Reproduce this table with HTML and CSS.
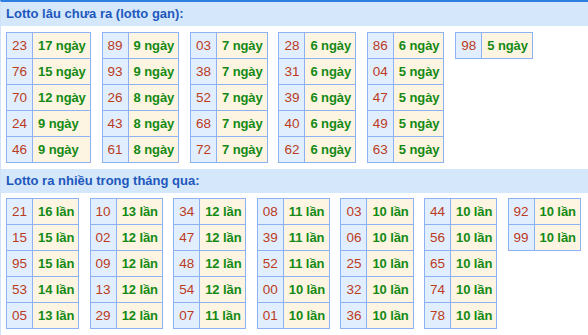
FILE: index.html
```html
<!DOCTYPE html>
<html lang="vi">
<head>
<meta charset="utf-8">
<link rel="stylesheet" href="styles.css">
</head>
<body>
<div class="box">
  <div class="head">Lotto lâu chưa ra (lotto gan):</div>
  <div class="tables">
    <table class="lt">
      <tr><td class="n">23</td><td class="v">17 ngày</td></tr>
      <tr><td class="n">76</td><td class="v">15 ngày</td></tr>
      <tr><td class="n">70</td><td class="v">12 ngày</td></tr>
      <tr><td class="n">24</td><td class="v">9 ngày</td></tr>
      <tr><td class="n">46</td><td class="v">9 ngày</td></tr>
    </table>
    <table class="lt">
      <tr><td class="n">89</td><td class="v">9 ngày</td></tr>
      <tr><td class="n">93</td><td class="v">9 ngày</td></tr>
      <tr><td class="n">26</td><td class="v">8 ngày</td></tr>
      <tr><td class="n">43</td><td class="v">8 ngày</td></tr>
      <tr><td class="n">61</td><td class="v">8 ngày</td></tr>
    </table>
    <table class="lt">
      <tr><td class="n">03</td><td class="v">7 ngày</td></tr>
      <tr><td class="n">38</td><td class="v">7 ngày</td></tr>
      <tr><td class="n">52</td><td class="v">7 ngày</td></tr>
      <tr><td class="n">68</td><td class="v">7 ngày</td></tr>
      <tr><td class="n">72</td><td class="v">7 ngày</td></tr>
    </table>
    <table class="lt">
      <tr><td class="n">28</td><td class="v">6 ngày</td></tr>
      <tr><td class="n">31</td><td class="v">6 ngày</td></tr>
      <tr><td class="n">39</td><td class="v">6 ngày</td></tr>
      <tr><td class="n">40</td><td class="v">6 ngày</td></tr>
      <tr><td class="n">62</td><td class="v">6 ngày</td></tr>
    </table>
    <table class="lt">
      <tr><td class="n">86</td><td class="v">6 ngày</td></tr>
      <tr><td class="n">04</td><td class="v">5 ngày</td></tr>
      <tr><td class="n">47</td><td class="v">5 ngày</td></tr>
      <tr><td class="n">49</td><td class="v">5 ngày</td></tr>
      <tr><td class="n">63</td><td class="v">5 ngày</td></tr>
    </table>
    <table class="lt">
      <tr><td class="n">98</td><td class="v">5 ngày</td></tr>
    </table>
  </div>
  <div class="head">Lotto ra nhiều trong tháng qua:</div>
  <div class="tables t2">
    <table class="lt">
      <tr><td class="n">21</td><td class="v">16 lần</td></tr>
      <tr><td class="n">15</td><td class="v">15 lần</td></tr>
      <tr><td class="n">95</td><td class="v">15 lần</td></tr>
      <tr><td class="n">53</td><td class="v">14 lần</td></tr>
      <tr><td class="n">05</td><td class="v">13 lần</td></tr>
    </table>
    <table class="lt">
      <tr><td class="n">10</td><td class="v">13 lần</td></tr>
      <tr><td class="n">02</td><td class="v">12 lần</td></tr>
      <tr><td class="n">09</td><td class="v">12 lần</td></tr>
      <tr><td class="n">13</td><td class="v">12 lần</td></tr>
      <tr><td class="n">29</td><td class="v">12 lần</td></tr>
    </table>
    <table class="lt">
      <tr><td class="n">34</td><td class="v">12 lần</td></tr>
      <tr><td class="n">47</td><td class="v">12 lần</td></tr>
      <tr><td class="n">48</td><td class="v">12 lần</td></tr>
      <tr><td class="n">54</td><td class="v">12 lần</td></tr>
      <tr><td class="n">07</td><td class="v">11 lần</td></tr>
    </table>
    <table class="lt">
      <tr><td class="n">08</td><td class="v">11 lần</td></tr>
      <tr><td class="n">39</td><td class="v">11 lần</td></tr>
      <tr><td class="n">52</td><td class="v">11 lần</td></tr>
      <tr><td class="n">00</td><td class="v">10 lần</td></tr>
      <tr><td class="n">01</td><td class="v">10 lần</td></tr>
    </table>
    <table class="lt">
      <tr><td class="n">03</td><td class="v">10 lần</td></tr>
      <tr><td class="n">06</td><td class="v">10 lần</td></tr>
      <tr><td class="n">25</td><td class="v">10 lần</td></tr>
      <tr><td class="n">32</td><td class="v">10 lần</td></tr>
      <tr><td class="n">36</td><td class="v">10 lần</td></tr>
    </table>
    <table class="lt">
      <tr><td class="n">44</td><td class="v">10 lần</td></tr>
      <tr><td class="n">56</td><td class="v">10 lần</td></tr>
      <tr><td class="n">65</td><td class="v">10 lần</td></tr>
      <tr><td class="n">74</td><td class="v">10 lần</td></tr>
      <tr><td class="n">78</td><td class="v">10 lần</td></tr>
    </table>
    <table class="lt">
      <tr><td class="n">92</td><td class="v">10 lần</td></tr>
      <tr><td class="n">99</td><td class="v">10 lần</td></tr>
    </table>
  </div>
</div>
</body>
</html>
```

FILE: styles.css
```css
html, body {
  margin: 0;
  padding: 0;
  background: #ffffff;
}

.box {
  border-top: 2px solid #2f7fe0;
  border-left: 1px solid #cfe1f7;
  font-family: "Liberation Sans", Arial, sans-serif;
  font-size: 13px;
  min-height: 340px;
}

.head {
  background: #d5e7fb;
  color: #1d58bd;
  font-weight: bold;
  font-size: 13px;
  height: 24px;
  line-height: 24px;
  padding-left: 5px;
}

.tables {
  display: flex;
  align-items: flex-start;
  gap: 10.8px;
  padding: 6px 5px;
}

.tables.t2 {
  gap: 10.3px;
  padding-top: 5px;
}

.lt {
  border-collapse: collapse;
  flex: none;
}

.lt td {
  border: 1px solid #8db1f2;
  height: 25px;
  line-height: 25px;
  padding: 0 5px;
  box-sizing: content-box;
  white-space: nowrap;
}

.lt .n {
  background: #e1eefd;
  color: #bb3b1e;
  text-align: center;
  font-size: 13.5px;
}

.lt .v {
  background: #fef4e2;
  color: #148a14;
  font-weight: bold;
  padding: 0 4px 0 5px;
  letter-spacing: -0.1px;
}
```
